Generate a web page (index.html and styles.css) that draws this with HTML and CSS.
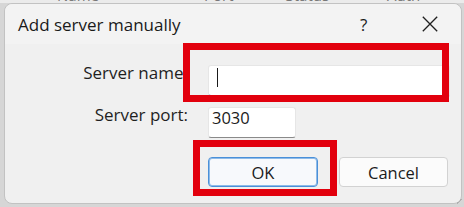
FILE: index.html
```html
<!DOCTYPE html>
<html>
<head>
<meta charset="utf-8">
<link rel="stylesheet" href="styles.css">
</head>
<body>
<div class="behind">
  <span class="col c1">Name</span><span class="col c2">Port</span><span class="col c3">Status</span><span class="col c4">Auth</span>
</div>
<div class="dialog">
  <div class="titlebar">
    <div class="title">Add server manually</div>
    <div class="help">?</div>
    <div class="close">
      <svg width="16" height="16" viewBox="0 0 16 16"><path d="M0.8 0.8 L15.2 15.2 M15.2 0.8 L0.8 15.2" stroke="#1f1f1f" stroke-width="1.3" fill="none"/></svg>
    </div>
  </div>
  <div class="form">
    <div class="label">Server name:</div>
    <div class="field name-field"><span class="caret"></span></div>
    <div class="label">Server port:</div>
    <div class="field port-field">3030</div>
    <div class="spacer"></div>
    <div class="buttons">
      <div class="btn btn-ok">OK</div>
      <div class="btn btn-cancel">Cancel</div>
    </div>
  </div>
  <div class="mark mark-name"></div>
  <div class="mark mark-ok"></div>
  <div class="grip"></div>
</div>
</body>
</html>
```
FILE: styles.css
```css
html, body {
  margin: 0;
  padding: 0;
}
body {
  width: 464px;
  height: 207px;
  overflow: hidden;
  background: #d6d6d6;
  font-family: "Open Sans", "Noto Sans", sans-serif;
  color: #1b1b1b;
}
.behind {
  height: 3px;
  overflow: hidden;
  background: #ebebeb;
  font-size: 15px;
  line-height: 15px;
  color: #777;
  white-space: nowrap;
}
.col {
  display: inline-block;
  margin-top: -12px;
  vertical-align: top;
}
.c1 { margin-left: 57px; }
.c2 { margin-left: 105px; }
.c3 { margin-left: 52px; }
.c4 { margin-left: 58px; }
.dialog {
  position: relative;
  margin-left: 4px;
  width: 456px;
  height: 199px;
  border: 1px solid #c2c2c2;
  border-radius: 8px;
  background: #f0f0f0;
}
.titlebar {
  height: 40px;
  display: flex;
  align-items: center;
  padding-left: 13px;
  background: #f3f3f3;
  border-radius: 8px 8px 0 0;
}
.title {
  font-size: 17px;
  flex: 1;
  color: #1a1a1a;
}
.help {
  font-size: 17px;
  width: 10px;
  margin-right: 52px;
  color: #1a1a1a;
}
.close {
  width: 16px;
  height: 16px;
  margin-right: 23px;
  display: flex;
}
.form {
  display: grid;
  grid-template-columns: 183px auto;
  column-gap: 20px;
  row-gap: 10px;
  margin-top: 21px;
  justify-content: start;
  align-items: start;
}
.label {
  justify-self: end;
  font-size: 17px;
  line-height: 20px;
  margin-top: -2px;
  color: #1f1f1f;
}
.field {
  background: #ffffff;
  border: 1px solid #e6e6e6;
  border-bottom-color: #8a8a8a;
  border-radius: 3px;
  box-sizing: border-box;
  font-size: 16.5px;
  line-height: 20px;
  display: flex;
  align-items: flex-start;
  padding-left: 3px;
}
.name-field {
  width: 242px;
  height: 32px;
  border-bottom: 2px solid #005fb8;
  padding-left: 8px;
}
.caret {
  width: 1px;
  height: 19px;
  margin-top: 2px;
  background: #1a1a1a;
}
.port-field {
  width: 88px;
  height: 31px;
}
.spacer {
  height: 0;
}
.buttons {
  display: flex;
  gap: 21px;
  margin-top: 9px;
}
.btn {
  width: 110px;
  height: 30px;
  box-sizing: border-box;
  border-radius: 4px;
  display: flex;
  align-items: center;
  justify-content: center;
  font-size: 16.5px;
  color: #1b1b1b;
}
.btn-ok {
  background: #f7f9fc;
  border: 1px solid #4a90d9;
  box-shadow: inset 0 0 0 1px #8fbbe8;
}
.btn-cancel {
  background: #fbfbfb;
  border: 1px solid #d2d2d2;
  width: 109px;
}
.mark {
  position: absolute;
  border: 7px solid #e2000d;
  box-sizing: border-box;
}
.mark-name {
  left: 178px;
  top: 39px;
  width: 266px;
  height: 59px;
}
.mark-ok {
  left: 188px;
  top: 136px;
  width: 144px;
  height: 56px;
}
.grip {
  position: absolute;
  right: -1px;
  bottom: -1px;
  width: 6px;
  height: 6px;
  background: linear-gradient(135deg, transparent 50%, #b0b0b0 50%, #b0b0b0 65%, transparent 65%);
}
```
